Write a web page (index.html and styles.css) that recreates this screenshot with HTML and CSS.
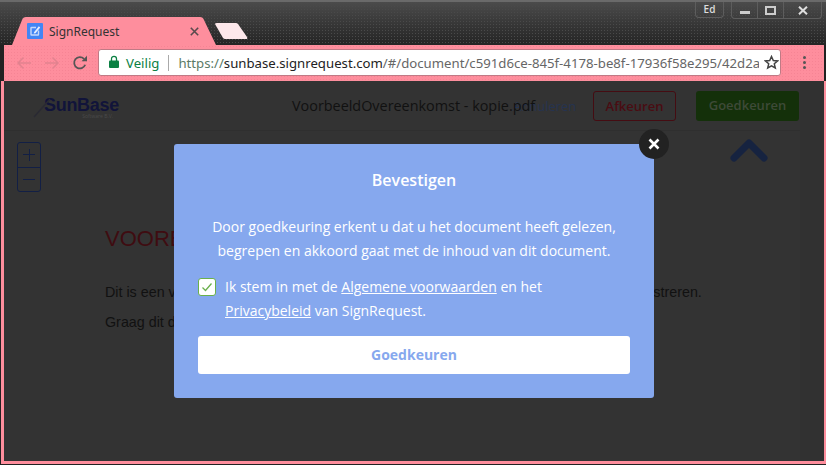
FILE: index.html
```html
<!DOCTYPE html>
<html>
<head>
    <title>SignRequest</title>
    <meta charset="utf-8">
    <link rel="stylesheet" href="styles.css">
</head>
<body>
<div class="window">
    <div class="titlebar">
        <div class="tabstrip">
            <div class="tab">
                <svg class="tabshape" width="204" height="28" viewBox="0 0 204 28"><path d="M0 28 L10 3 Q11 0 14 0 H188 Q191 0 192 3 L204 28 Z" fill="#fe8e9d"/></svg>
                <svg class="favicon" width="16" height="16" viewBox="0 0 16 16"><rect width="16" height="16" rx="1" fill="#4285f4"/><path d="M9 4.5H4.5a.5.5 0 0 0-.5.5v6.5a.5.5 0 0 0 .5.5H11a.5.5 0 0 0 .5-.5V7.5" fill="none" stroke="#c5d9fb" stroke-width="1.4"/><path d="M7 9.2 L11.8 3.2 L13.2 4.4 L8.6 10.2 L6.8 10.6 Z" fill="#e4eeff"/></svg>
                <span class="tabtitle">SignRequest</span>
                <svg class="tabclose" width="9" height="9" viewBox="0 0 9 9"><path d="M.8.8l7.4 7.4M8.2.8L.8 8.2" stroke="#5a4a4d" stroke-width="1.6"/></svg>
            </div>
            <svg class="newtab" width="33" height="16" viewBox="0 0 33 16"><path d="M0 1 Q0 0 2 0 H21 Q22 0 23 1 L32 14 Q33 16 31 16 H10 Q9 16 8 15 Z" fill="#fde8eb"/></svg>
        </div>
        <div class="winbtns">
            <div class="userbtn">Ed</div>
            <div class="ctrlgroup">
                <div class="ctrl"><span class="icon-min"></span></div>
                <div class="ctrl"><span class="icon-max"></span></div>
                <div class="ctrl ctrl-close">
                    <svg width="10" height="9" viewBox="0 0 10 9"><path d="M1 .7l8 7.6M9 .7L1 8.3" stroke="#ddd" stroke-width="2"/></svg>
                </div>
            </div>
        </div>
    </div>
    <div class="toolbar">
        <svg class="navicon" width="16" height="14" viewBox="0 0 16 14"><path d="M15 7H2M7.500 1.500L2 7l5.500 5.500" fill="none" stroke="#e2828f" stroke-width="1.500"/></svg>
        <svg class="navicon" width="16" height="14" viewBox="0 0 16 14"><path d="M1 7h13M8.500 1.500L14 7l-5.500 5.500" fill="none" stroke="#e2828f" stroke-width="1.500"/></svg>
        <svg class="navicon reload" width="16" height="16" viewBox="0 0 16 16"><path d="M13.200 9.800A5.700 5.700 0 1 1 12 3.800" fill="none" stroke="#555" stroke-width="1.800"/><path d="M9.500 6.200H15V.8Z" fill="#555"/></svg>
        <div class="omnibox">
            <svg class="lock" width="10" height="13" viewBox="0 0 10 13"><path d="M2.500 6V3.800a2.500 2.500 0 0 1 5 0V6" fill="none" stroke="#0b8043" stroke-width="1.300"/><rect y="5.500" width="10" height="7.500" rx="1" fill="#0b8043"/></svg>
            <span class="secure">Veilig</span>
            <span class="sep"></span>
            <span class="url"><span class="https">https://</span><span class="host">sunbase.signrequest.com</span>/#/document/c591d6ce-845f-4178-be8f-17936f58e295/42d2a</span>
            <svg class="star" width="15" height="15" viewBox="0 0 15 15"><path d="M7.500 1.500l1.800 4 4.300.4-3.300 2.900 1 4.200-3.800-2.200-3.800 2.200 1-4.200L1.400 5.900l4.300-.4z" fill="none" stroke="#444" stroke-width="1.500"/></svg>
        </div>
        <div class="menu"><i></i><i></i><i></i></div>
    </div>
    <div class="content">
        <div class="page">
            <div class="dochead">
                <div class="logo">
                    <svg class="swoosh" width="18" height="20" viewBox="0 0 18 20"><path d="M1 19L17 1" stroke="#2a2a33" stroke-width="1.500"/></svg>
                    <span class="logoname">SunBase</span>
                    <span class="logosub">Software B.V.</span>
                </div>
                <div class="docname">VoorbeeldOvereenkomst - kopie.pdf</div>
                <a class="cancel">Annuleren</a>
                <div class="btn btn-reject">Afkeuren</div>
                <div class="btn btn-approve">Goedkeuren</div>
            </div>
            <div class="docbody">
                <h1>VOORBEELD OVEREENKOMST</h1>
                <p>Dit is een voorbeeld van een overeenkomst om de werking van SignRequest te demonstreren.</p>
                <p>Graag dit document ondertekenen.</p>
            </div>
            <div class="zoomctl">
                <div class="zoombtn"><span class="plus"></span></div>
                <div class="zoombtn"><span class="minus"></span></div>
            </div>
            <svg class="pageup" width="38" height="24" viewBox="0 0 38 24"><path d="M4 20L19 5l15 15" fill="none" stroke="#162340" stroke-width="7" stroke-linecap="round" stroke-linejoin="round"/></svg>
        </div>
        <div class="modal">
            <div class="modalclose">
                <svg width="12" height="12" viewBox="0 0 12 12"><path d="M1.500 1.500l9 9M10.500 1.500l-9 9" stroke="#fff" stroke-width="2.600"/></svg>
            </div>
            <h2>Bevestigen</h2>
            <p class="intro">Door goedkeuring erkent u dat u het document heeft gelezen,<br>begrepen en akkoord gaat met de inhoud van dit document.</p>
            <div class="agree">
                <div class="checkbox">
                    <svg width="12" height="10" viewBox="0 0 12 10"><path d="M1.500 5.500L4.500 8.500 10.500 1.500" fill="none" stroke="#6ab04c" stroke-width="1.300"/></svg>
                </div>
                <div>Ik stem in met de <a>Algemene voorwaarden</a> en het<br><a>Privacybeleid</a> van SignRequest.</div>
            </div>
            <div class="confirm">Goedkeuren</div>
        </div>
    </div>
</div>
</body>
</html>
```

FILE: styles.css
```css
html,body{
    margin:0;
    height:100%;
    overflow:hidden;
}
.window{
    width:826px;
    height:465px;
    display:flex;
    flex-direction:column;
    background:#222;
    font-family:"Open Sans","Noto Sans",sans-serif;
}

/* title bar */
.titlebar{
    height:45px;
    flex:none;
    display:flex;
    justify-content:space-between;
    background-color:#333;
    background-image:radial-gradient(#4a4a4a 1px,transparent 1px),linear-gradient(#4b4b4b,#3f3f3f 30%,#242424);
    background-size:3px 3px,100% 100%;
    border-top:2px solid #6a6a6a;
    box-sizing:border-box;
}
.tabstrip{
    display:flex;
    align-items:flex-end;
    padding-left:12px;
}
.tab{
    position:relative;
    width:204px;
    height:28px;
    display:flex;
    align-items:center;
    padding-left:15px;
    box-sizing:border-box;
}
.tabshape{
    position:absolute;
    left:0;
    top:0;
}
.favicon,.tabtitle,.tabclose{
    position:relative;
}
.tabtitle{
    margin-left:6px;
    font-size:12px;
    color:#333;
    font-family:"Noto Sans",sans-serif;
}
.tabclose{
    margin-left:auto;
    margin-right:17px;
}
.newtab{
    margin:0 0 6px -1px;
}
.winbtns{
    display:flex;
    padding-right:4px;
    gap:7px;
}
.userbtn{
    width:29px;
    height:16px;
    border:1px solid #5d5d5d;
    border-top:0;
    border-radius:0 0 4px 4px;
    box-sizing:border-box;
    color:#ddd;
    font-size:10px;
    font-weight:600;
    text-align:center;
    line-height:15px;
}
.ctrlgroup{
    display:flex;
    width:91px;
    height:17px;
    border:1px solid #5d5d5d;
    border-top:0;
    border-radius:0 0 4px 4px;
    box-sizing:border-box;
}
.ctrl{
    width:25px;
    display:flex;
    align-items:center;
    justify-content:center;
    border-right:1px solid #5d5d5d;
}
.ctrl-close{
    flex:1;
    border-right:0;
}
.icon-min{
    width:10px;
    height:3px;
    margin-top:5px;
    background:#ccc;
}
.icon-max{
    width:7px;
    height:5px;
    border:2px solid #ccc;
}

/* toolbar */
.toolbar{
    height:36px;
    margin:0 2px 0 4px;
    display:flex;
    align-items:center;
    padding:0 0 1px 12px;
    box-sizing:border-box;
    flex:none;
    background-color:#fe8e9d;
    background-image:radial-gradient(#f68494 1px,transparent 1px);
    background-size:3px 3px;
}
.navicon{
    margin-right:12px;
}
.reload{
    margin-right:10px;
}
.omnibox{
    width:683px;
    height:27px;
    flex:none;
    display:flex;
    align-items:center;
    background:#fff;
    border:1px solid #c07a85;
    border-radius:3px;
    box-sizing:border-box;
    padding-left:10px;
    font-family:"Noto Sans",sans-serif;
    font-size:13.2px;
    color:#666;
    white-space:nowrap;
    overflow:hidden;
}
.lock{
    flex:none;
    margin-top:-2px;
}
.secure{
    color:#0b8043;
    margin-left:7px;
}
.sep{
    flex:none;
    width:1px;
    height:16px;
    margin:0 9px;
    background:#aaa;
}
.url{
    flex:1;
    overflow:hidden;
}
.https{
    color:#5b7a66;
}
.host{
    color:#222;
}
.star{
    flex:none;
    margin:0 1px 0 5px;
}
.menu{
    display:flex;
    flex-direction:column;
    gap:2px;
    margin-left:22px;
}
.menu i{
    width:3px;
    height:3px;
    border-radius:50%;
    background:#555;
}

/* page under the dialog */
.content{
    position:relative;
    flex:1;
    margin:0 0 1px 1px;
    border:solid #fe8e9d;
    border-width:0 2px 3px 3px;
}
.page{
    height:100%;
    overflow:hidden;
    background:#333;
    border-right:24px solid #313131;
    box-sizing:border-box;
    position:relative;
}
.dochead{
    height:49px;
    display:flex;
    align-items:center;
    border-bottom:1px solid #2f2f2f;
    position:relative;
}
.logo{
    position:absolute;
    left:40px;
    top:15px;
    width:74px;
    color:#11143a;
    line-height:1;
    text-align:right;
}
.swoosh{
    position:absolute;
    left:-11px;
    top:2px;
}
.logoname{
    display:block;
    font-family:"Liberation Sans",sans-serif;
    font-weight:bold;
    font-size:18px;
    letter-spacing:-.3px;
}
.logosub{
    display:block;
    font-size:5px;
    margin-right:5px;
    color:#4a4a4a;
}
.docname{
    margin-left:288px;
    font-size:14.4px;
    color:#111;
    white-space:nowrap;
    width:221px;
    flex:none;
    position:relative;
    z-index:1;
}
.cancel{
    font-size:13px;
    color:#263350;
    width:63px;
    flex:none;
}
.btn{
    height:30px;
    line-height:28px;
    box-sizing:border-box;
    border-radius:3px;
    text-align:center;
    font-size:13px;
    font-weight:600;
    flex:none;
}
.btn-reject{
    width:83px;
    margin-left:17px;
    border:1px solid #450c12;
    color:#4a0c12;
}
.btn-approve{
    width:103px;
    margin-left:20px;
    background:#14300a;
    color:#3e4a38;
}
.docbody{
    padding:93px 0 0 101px;
    font-family:"Liberation Sans",sans-serif;
    color:#111;
}
.docbody h1{
    margin:0 0 29px;
    font-size:22px;
    line-height:30px;
    font-weight:normal;
    color:#3f0c11;
    white-space:nowrap;
}
.docbody p{
    margin:0 0 12px;
    font-size:14.3px;
    line-height:18px;
    white-space:nowrap;
}
.zoomctl{
    position:absolute;
    left:13px;
    top:61px;
    width:24px;
    border:1px solid #121f45;
    border-radius:3px;
    box-sizing:border-box;
}
.zoombtn{
    height:23.500px;
    display:flex;
    align-items:center;
    justify-content:center;
}
.zoombtn + .zoombtn{
    border-top:1px solid #121f45;
}
.plus,.minus{
    width:12px;
    height:1px;
    background:#121f45;
    position:relative;
}
.plus::after{
    content:"";
    position:absolute;
    left:5.500px;
    top:-5.500px;
    width:1px;
    height:12px;
    background:#121f45;
}
.pageup{
    position:absolute;
    left:726px;
    top:57px;
}

/* dialog */
.modal{
    position:absolute;
    left:170px;
    top:63px;
    width:480px;
    height:254px;
    padding:0 24px;
    box-sizing:border-box;
    background:#86a8ee;
    border-radius:3px;
    color:#fff;
    font-size:14px;
    line-height:24px;
}
.modalclose{
    position:absolute;
    right:-15px;
    top:-15px;
    width:30px;
    height:30px;
    border-radius:50%;
    background:#222;
    display:flex;
    align-items:center;
    justify-content:center;
}
.modal h2{
    margin:0;
    padding-top:24px;
    font-size:16px;
    line-height:24px;
    font-weight:600;
    text-align:center;
}
.intro{
    margin:23px 0 0;
    text-align:center;
}
.agree{
    display:flex;
    gap:9px;
    margin-top:12px;
}
.agree a{
    text-decoration:underline;
}
.checkbox{
    flex:none;
    width:18px;
    height:18px;
    margin-top:3px;
    box-sizing:border-box;
    background:#fff;
    border:1px solid #6ab04c;
    border-radius:3px;
    display:flex;
    align-items:center;
    justify-content:center;
}
.confirm{
    height:38px;
    margin-top:13px;
    background:#fff;
    border-radius:3px;
    color:#86a8ee;
    font-weight:700;
    line-height:38px;
    text-align:center;
}
```
